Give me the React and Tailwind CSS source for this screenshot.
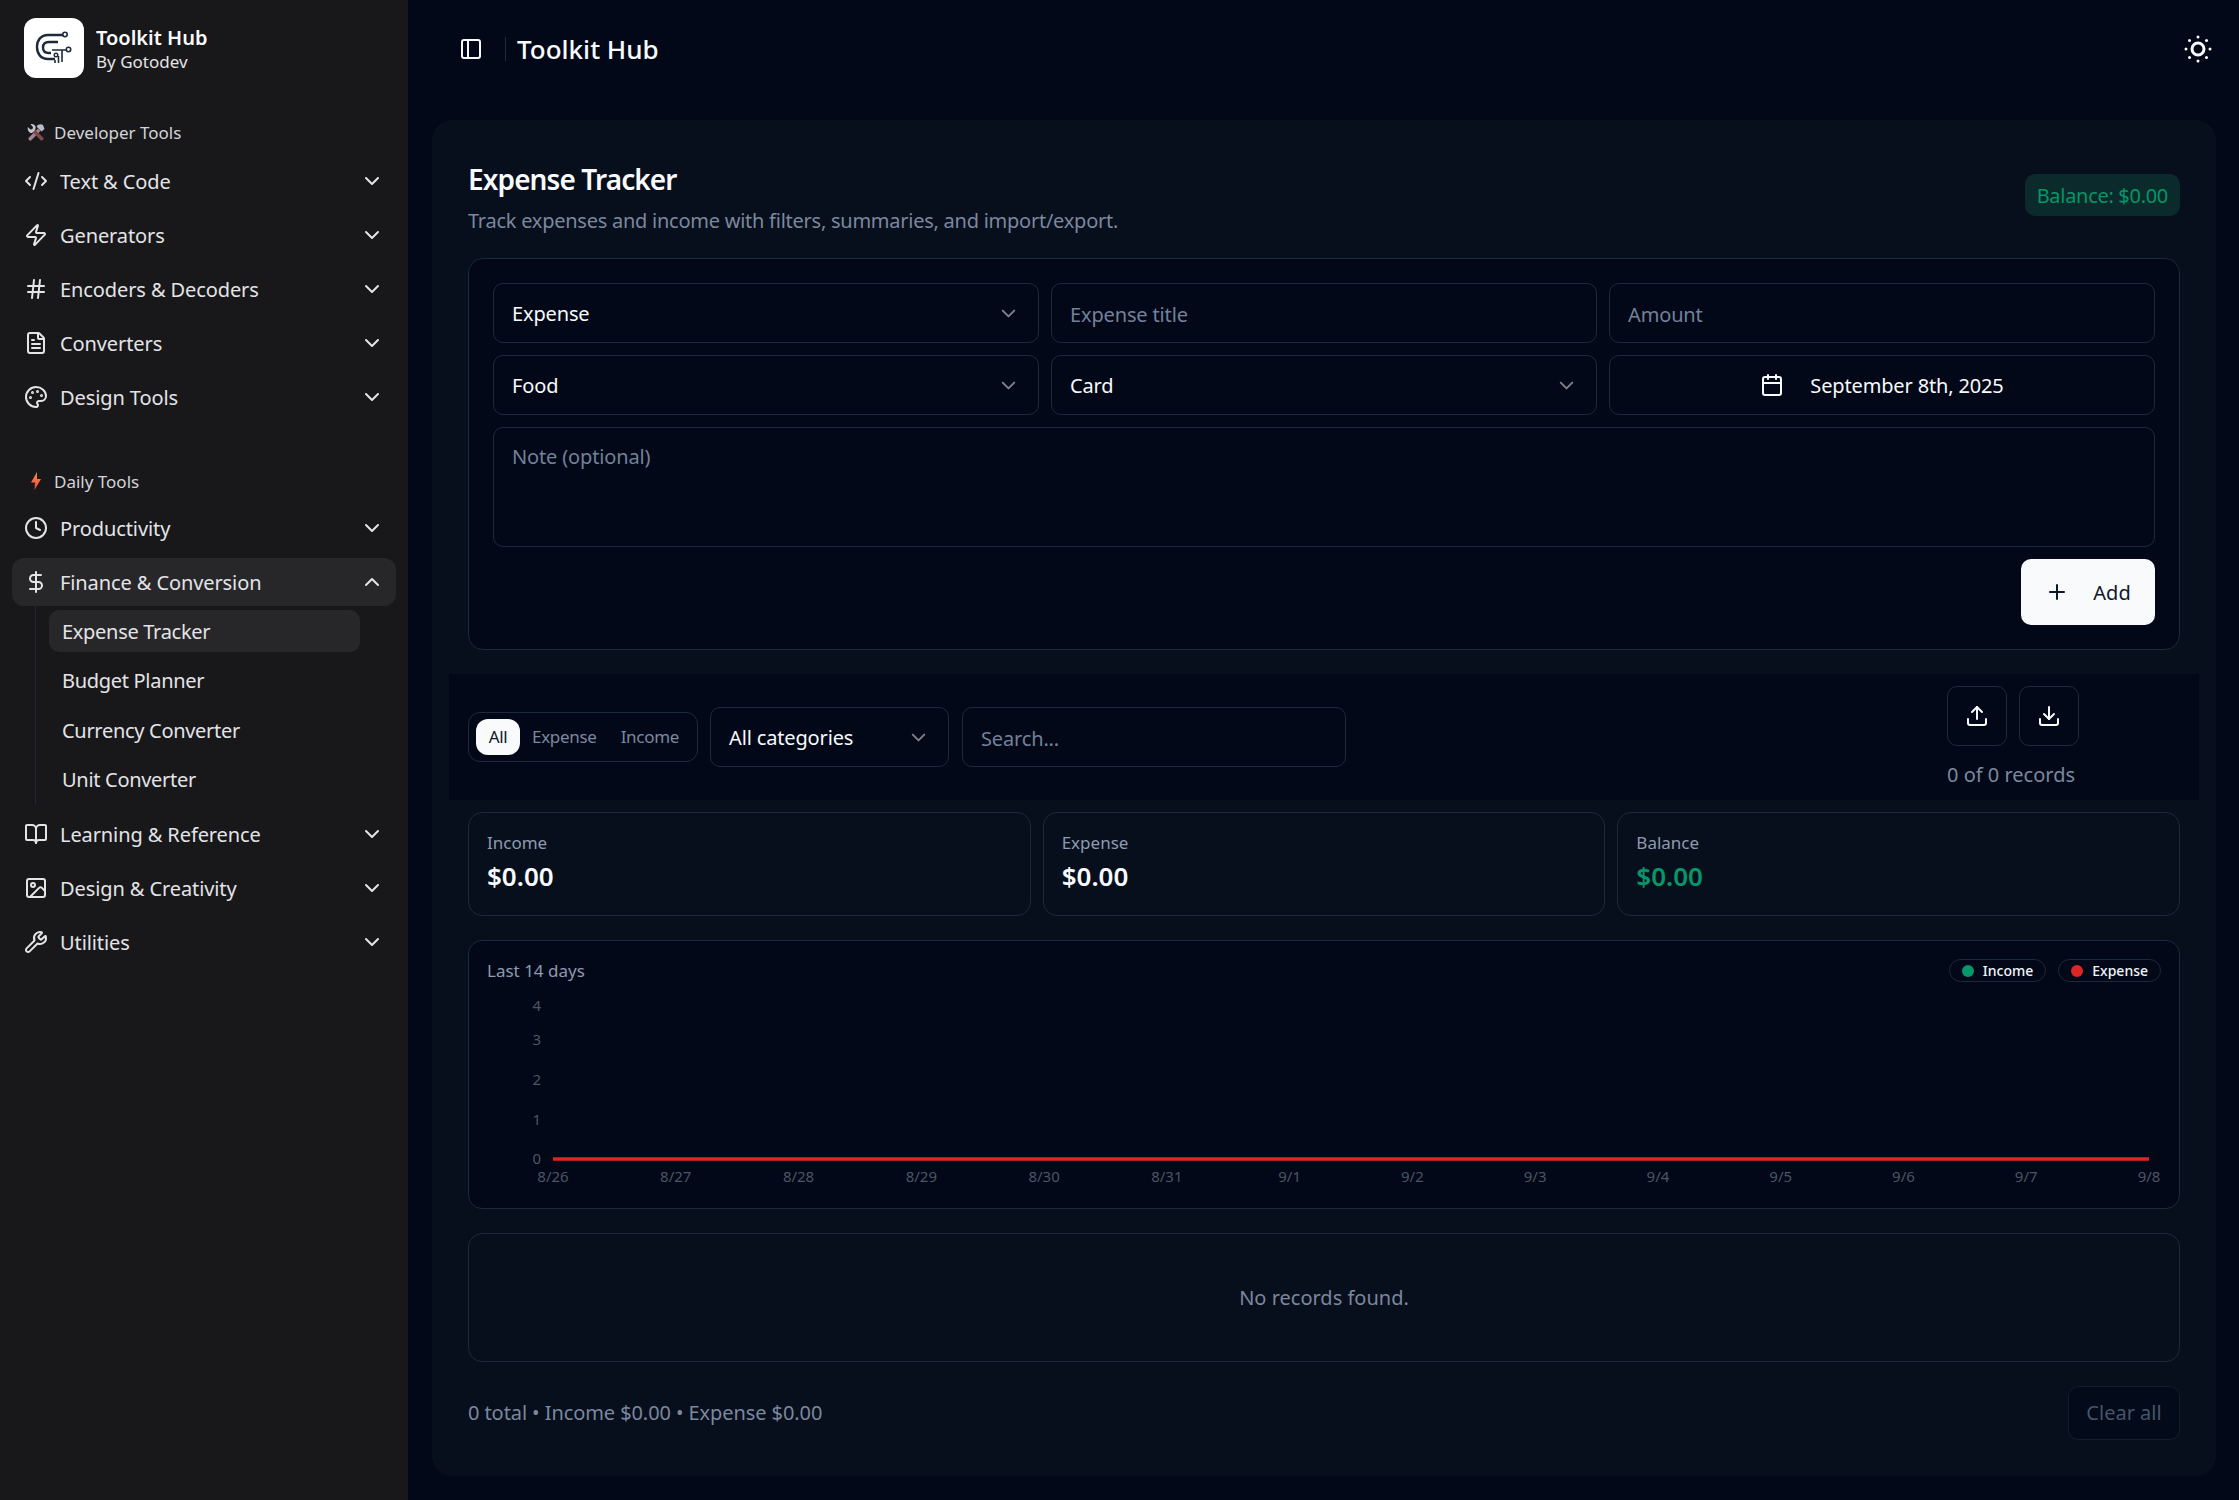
import React from 'react';
import {
  BookOpen,
  Calendar,
  ChevronDown,
  ChevronUp,
  Clock,
  CodeXml,
  DollarSign,
  Download,
  FileText,
  Hash,
  Image,
  PanelLeft,
  Palette,
  Plus,
  SunDim,
  Upload,
  Wrench,
  Zap,
} from 'lucide-react';

const devTools = [
  { label: 'Text & Code', icon: CodeXml },
  { label: 'Generators', icon: Zap },
  { label: 'Encoders & Decoders', icon: Hash },
  { label: 'Converters', icon: FileText },
  { label: 'Design Tools', icon: Palette },
];

const financeLinks = ['Expense Tracker', 'Budget Planner', 'Currency Converter', 'Unit Converter'];

const afterFinance = [
  { label: 'Learning & Reference', icon: BookOpen },
  { label: 'Design & Creativity', icon: Image },
  { label: 'Utilities', icon: Wrench },
];

const days = ['8/26', '8/27', '8/28', '8/29', '8/30', '8/31', '9/1', '9/2', '9/3', '9/4', '9/5', '9/6', '9/7', '9/8'];
const yTicks = [
  { label: '4', y: 19 },
  { label: '3', y: 53 },
  { label: '2', y: 93 },
  { label: '1', y: 133 },
  { label: '0', y: 172 },
];

const Logo = () => (
  <svg viewBox="0 0 60 60" className="h-[60px] w-[60px]" fill="none" stroke="#1e293b" strokeWidth="2">
    <path d="M39 17H24C17 17 13 22 13 29C13 36 17 41 24 41H31" strokeWidth="2.4" />
    <path d="M34 24H25C21 24 19 26 19 29.5C19 33 21 35 25 35H27" strokeWidth="2.4" />
    <circle cx="41" cy="16.5" r="2.2" strokeWidth="1.6" />
    <circle cx="44.5" cy="31.5" r="2.2" strokeWidth="1.6" />
    <circle cx="32" cy="37" r="1.8" strokeWidth="1.4" />
    <path d="M42.5 32H28M38 32V44M34.5 38V45M31 42V45" strokeWidth="1.6" />
  </svg>
);

const ToolsEmoji = () => (
  <svg viewBox="0 0 18 18" className="h-[19px] w-[19px]">
    <path d="M1.5 14.5 11 5l2.5 2.5-9.5 9.5c-1 .7-3.2-1.200-2.500-2.500z" fill="#a78295" />
    <path d="M9.500 3C11 .8 14 .2 16 1.500l1.500 4-3 2.500L9.500 3z" fill="#b9bcc4" />
    <path d="M16.500 14.500 7.500 5.500l-2.500 2.500 9 9c1 .6 3.200-1.200 2.500-2.500z" fill="#7d4a4e" />
    <path d="M.8 3.500 3.500 6l2-.5.5-2L3.500.8C5.500 0 7.800 1 8.500 3c.5 1.500-.2 3-1 4L5 9.500C2.500 10 .2 7 .8 3.500z" fill="#c3c5cc" />
  </svg>
);

const BoltEmoji = () => (
  <svg viewBox="0 0 10 18" className="h-[18px] w-[10px]">
    <defs>
      <linearGradient id="bolt" x1="0" y1="0" x2="0" y2="1">
        <stop offset="0" stopColor="#fb923c" />
        <stop offset="1" stopColor="#ef4444" />
      </linearGradient>
    </defs>
    <path d="M6 0 0 10.500h4L3.500 18 10 7H6z" fill="url(#bolt)" />
  </svg>
);

const NavRow = ({ label, icon: Icon, open, active }) => (
  <div className={`flex h-[48px] items-center rounded-[12px] pl-[12px] pr-[12px] text-[20px] text-[#e4e4e7] ${active ? 'bg-[#27272a]' : ''}`}>
    <Icon size={24} strokeWidth={2} className="shrink-0" />
    <span className="ml-[12px] flex-1 truncate pt-[2px] tracking-[-0.1px]">{label}</span>
    {open ? <ChevronUp size={24} /> : <ChevronDown size={24} />}
  </div>
);

const GroupLabel = ({ children, icon }) => (
  <div className="flex h-[30px] items-center px-[15px] text-[17px] text-[#d4d4d8]">
    <span className="flex w-[27px] shrink-0 items-center justify-center pr-[9px]">{icon}</span>
    <span className="pt-[1px]">{children}</span>
  </div>
);

const Sidebar = () => (
  <aside className="flex w-[408px] shrink-0 flex-col bg-[#18181b] pt-[18px]">
    <div className="flex items-center gap-[12px] px-[24px]">
      <div className="flex h-[60px] w-[60px] items-center justify-center rounded-[12px] bg-white">
        <Logo />
      </div>
      <div className="flex flex-col pt-[3px] leading-[24px]">
        <span className="text-[20px] font-semibold text-[#fafafa]">Toolkit Hub</span>
        <span className="text-[17px] text-[#e4e4e7]">By Gotodev</span>
      </div>
    </div>

    <div className="mt-[39px] px-[12px]">
      <div className="mb-[10px]">
        <GroupLabel icon={<ToolsEmoji />}>Developer Tools</GroupLabel>
      </div>
      <div className="flex flex-col gap-[6px]">
        {devTools.map((item) => (
          <NavRow key={item.label} {...item} />
        ))}
      </div>
    </div>

    <div className="mt-[45px] px-[12px]">
      <div className="mb-[8px]">
        <GroupLabel icon={<BoltEmoji />}>Daily Tools</GroupLabel>
      </div>
      <div className="flex flex-col gap-[6px]">
        <NavRow label="Productivity" icon={Clock} />
        <div>
          <NavRow label="Finance & Conversion" icon={DollarSign} open active />
          <div className="ml-[23px] flex w-[325px] flex-col gap-[7.400px] border-l border-[#1e293b] pb-[4px] pl-[13px] pt-[4px]">
            {financeLinks.map((link, i) => (
              <div
                key={link}
                className={`flex h-[42px] items-center rounded-[10px] px-[13px] pt-[2px] text-[20px] tracking-[-0.3px] text-[#e4e4e7] ${i === 0 ? 'bg-[#27272a]' : ''}`}
              >
                {link}
              </div>
            ))}
          </div>
        </div>
        {afterFinance.map((item) => (
          <NavRow key={item.label} {...item} />
        ))}
      </div>
    </div>
  </aside>
);

const fieldBase = 'h-[60px] rounded-[10px] border border-[#1e293b] bg-[#020817] px-[18px] text-[20px] tracking-[-0.15px]';

const SelectField = ({ value, className = '' }) => (
  <div className={`flex items-center justify-between ${fieldBase} text-[#f8fafc] ${className}`}>
    <span className="pt-[2px]">{value}</span>
    <ChevronDown size={23} className="text-[#f8fafc] opacity-50" />
  </div>
);

const TextField = ({ placeholder, className = '' }) => (
  <input
    placeholder={placeholder}
    className={`${fieldBase} w-full pt-[2px] outline-none placeholder:text-[#73819a] ${className}`}
  />
);

const StatCard = ({ label, value, green }) => (
  <div className="flex h-[104px] flex-col rounded-[14px] border border-[#1e293b] bg-[#070e1c] px-[18px] pt-[18px]">
    <span className="text-[17px] leading-[24px] text-[#8e9bb0]">{label}</span>
    <span className={`mt-[3px] text-[26px] font-semibold leading-[36px] ${green ? 'text-[#059669]' : 'text-[#f8fafc]'}`}>{value}</span>
  </div>
);

const LegendPill = ({ label, dot }) => (
  <span className="flex h-[23px] items-center gap-[9px] rounded-full border border-[#1e293b] px-[12px] text-[14px] font-medium text-[#f1f5f9]">
    <span className={`h-[12px] w-[12px] rounded-full ${dot}`} />
    {label}
  </span>
);

const Chart = () => (
  <svg viewBox="0 0 1674 216" className="mt-[4px] h-[216px] w-[1674px]">
    {yTicks.map((t) => (
      <text key={t.label} x="54" y={t.y} textAnchor="end" dominantBaseline="central" className="fill-[#4b5563] text-[15px]">
        {t.label}
      </text>
    ))}
    <line x1="66" y1="173" x2="1662" y2="173" stroke="#dc2626" strokeWidth="3.500" />
    {days.map((d, i) => (
      <text key={d} x={66 + i * 122.77} y="190" textAnchor="middle" dominantBaseline="central" className="fill-[#4b5563] text-[15px]">
        {d}
      </text>
    ))}
  </svg>
);

const ExpenseCard = () => (
  <section className="flex-1 rounded-[20px] bg-[#070e1c] px-[36px] pb-[36px] pt-[39px]">
    <div className="flex items-start justify-between">
      <div>
        <h1 className="text-[28px] font-semibold leading-[40px] tracking-[-0.9px] text-[#f8fafc]">Expense Tracker</h1>
        <p className="mt-[8px] text-[20px] leading-[28px] tracking-[-0.25px] text-[#7b889e]">
          Track expenses and income with filters, summaries, and import/export.
        </p>
      </div>
      <span className="mt-[15px] flex h-[42px] items-center rounded-[10px] bg-[#0a2a2b] px-[12px] pt-[2px] text-[20px] tracking-[-0.3px] text-[#059669]">
        Balance: $0.00
      </span>
    </div>

    <div className="mt-[23px] flex flex-col gap-[12px] rounded-[15px] border border-[#1e293b] bg-[#020817] p-[24px]">
      <div className="grid grid-cols-3 gap-[12px]">
        <SelectField value="Expense" />
        <TextField placeholder="Expense title" />
        <TextField placeholder="Amount" />
        <SelectField value="Food" />
        <SelectField value="Card" />
        <div className={`flex items-center justify-center gap-[26px] ${fieldBase} text-[#f8fafc]`}>
          <Calendar size={24} />
          <span className="pt-[2px]">September 8th, 2025</span>
        </div>
      </div>
      <textarea
        placeholder="Note (optional)"
        className="h-[120px] w-full resize-none rounded-[10px] border border-[#1e293b] bg-[#020817] px-[18px] pb-[12px] pt-[14px] text-[20px] tracking-[-0.15px] outline-none placeholder:text-[#73819a]"
      />
      <div className="flex justify-end">
        <button className="flex h-[66px] w-[134px] items-center justify-center gap-[24px] rounded-[10px] bg-[#f8fafc] text-[20px] text-[#0f172a]">
          <Plus size={24} />
          <span className="pt-[2px]">Add</span>
        </button>
      </div>
    </div>

    <div className="-mx-[19px] mt-[24px] flex h-[126px] items-center bg-[#020817] px-[19px]">
      <div className="flex h-[50px] w-[230px] items-center rounded-[12px] border border-[#1e293b] pl-[7px] text-[17px] tracking-[-0.3px] text-[#7b889e]">
        <span className="flex h-[36px] w-[44px] items-center justify-center rounded-[12px] bg-[#f8fafc] text-[#0f172a]">All</span>
        <span className="ml-[12px]">Expense</span>
        <span className="ml-[24px]">Income</span>
      </div>
      <SelectField value="All categories" className="ml-[12px] w-[239px]" />
      <TextField placeholder="Search..." className="ml-[13px] !w-[384px]" />
      <div className="ml-auto flex w-[233px] flex-col self-start pt-[12px]">
        <div className="flex gap-[12px]">
          <button className="flex h-[60px] w-[60px] items-center justify-center rounded-[10px] border border-[#1e293b] text-[#f8fafc]">
            <Upload size={24} />
          </button>
          <button className="flex h-[60px] w-[60px] items-center justify-center rounded-[10px] border border-[#1e293b] text-[#f8fafc]">
            <Download size={24} />
          </button>
        </div>
        <span className="mt-[15px] text-[20px] leading-[28px] text-[#7b889e]">0 of 0 records</span>
      </div>
    </div>

    <div className="mt-[12px] grid grid-cols-3 gap-[12px]">
      <StatCard label="Income" value="$0.00" />
      <StatCard label="Expense" value="$0.00" />
      <StatCard label="Balance" value="$0.00" green />
    </div>

    <div className="mt-[24px] h-[269px] rounded-[14px] border border-[#1e293b] bg-[#020817] px-[18px] pt-[18px]">
      <div className="flex h-[23px] items-center justify-between">
        <span className="text-[17px] text-[#8e9bb0]">Last 14 days</span>
        <div className="flex gap-[12px]">
          <LegendPill label="Income" dot="bg-[#059669]" />
          <LegendPill label="Expense" dot="bg-[#dc2626]" />
        </div>
      </div>
      <Chart />
    </div>

    <div className="mt-[24px] flex h-[129px] items-center justify-center rounded-[14px] border border-[#1e293b] text-[20px] text-[#7b889e]">
      No records found.
    </div>

    <div className="mt-[24px] flex items-center justify-between">
      <span className="text-[20px] tracking-[-0.08px] text-[#7b889e]">0 total • Income $0.00 • Expense $0.00</span>
      <button className="flex h-[54px] w-[112px] items-center justify-center rounded-[10px] border border-[#1e293b]/60 bg-[#020817]/60 text-[20px] text-[#475569]">
        Clear all
      </button>
    </div>
  </section>
);

export default function App() {
  return (
    <div className="flex min-h-[1500px] w-[2239px] bg-[#020817] font-['Noto_Sans',sans-serif]">
      <Sidebar />
      <main className="flex min-w-0 flex-1 flex-col">
        <header className="flex h-[98px] items-center pl-[51px] pr-[23px] text-[#f8fafc]">
          <PanelLeft size={24} />
          <span className="ml-[22px] h-[24px] w-px bg-[#1e293b]" />
          <span className="ml-[11px] text-[26px] font-medium">Toolkit Hub</span>
          <SunDim size={36} className="ml-auto" />
        </header>
        <div className="ml-[24px] mr-[23px] mt-[22px] flex">
          <ExpenseCard />
        </div>
      </main>
    </div>
  );
}
